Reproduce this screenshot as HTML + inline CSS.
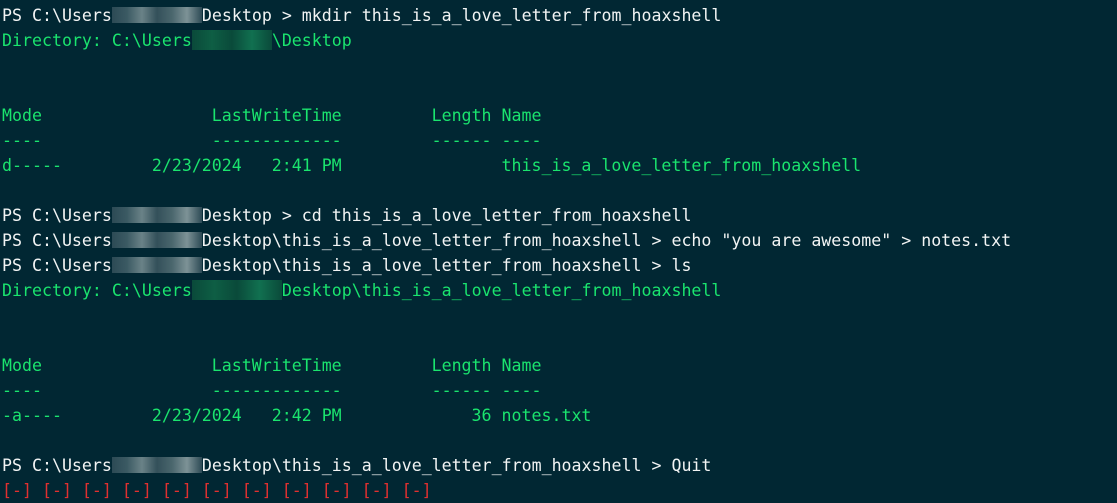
<!DOCTYPE html><html><head><style>
body{margin:0;background:#012733;width:1117px;height:485px;overflow:hidden}
pre{margin:0;padding:3px 0 0 2px;font-family:"DejaVu Sans Mono","Liberation Mono",monospace;font-size:16.6px;line-height:25px;color:#f2f4f4;white-space:pre}
.g{color:#1ae46e}
.b{display:inline-block;width:90px;height:16px;vertical-align:-2px;background:linear-gradient(90deg,#2c4a55,#3b5a63,#6a8287,#33505a,#4a666d,#7d9296,#2c4a55)}
.bg{display:inline-block;width:80px;height:20px;vertical-align:-4px;background:linear-gradient(90deg,#0a4a3a,#0e5e44,#0a4a3a,#117050,#0a4a3a)}
</style></head><body><pre>PS C:\Users<span class="b"></span>Desktop &gt; mkdir this_is_a_love_letter_from_hoaxshell
<span class="g">Directory: C:\Users<span class="bg"></span>\Desktop</span>


<span class="g">Mode                 LastWriteTime         Length Name
----                 -------------         ------ ----
d-----         2/23/2024   2:41 PM                this_is_a_love_letter_from_hoaxshell</span>

PS C:\Users<span class="b"></span>Desktop &gt; cd this_is_a_love_letter_from_hoaxshell
PS C:\Users<span class="b"></span>Desktop\this_is_a_love_letter_from_hoaxshell &gt; echo "you are awesome" &gt; notes.txt
PS C:\Users<span class="b"></span>Desktop\this_is_a_love_letter_from_hoaxshell &gt; ls
<span class="g">Directory: C:\Users<span class="bg" style="width:90px"></span>Desktop\this_is_a_love_letter_from_hoaxshell</span>


<span class="g">Mode                 LastWriteTime         Length Name
----                 -------------         ------ ----
-a----         2/23/2024   2:42 PM             36 notes.txt</span>

PS C:\Users<span class="b"></span>Desktop\this_is_a_love_letter_from_hoaxshell &gt; Quit
<span style="color:#e03030">[-] [-] [-] [-] [-] [-] [-] [-] [-] [-] [-]</span></pre></body></html>
